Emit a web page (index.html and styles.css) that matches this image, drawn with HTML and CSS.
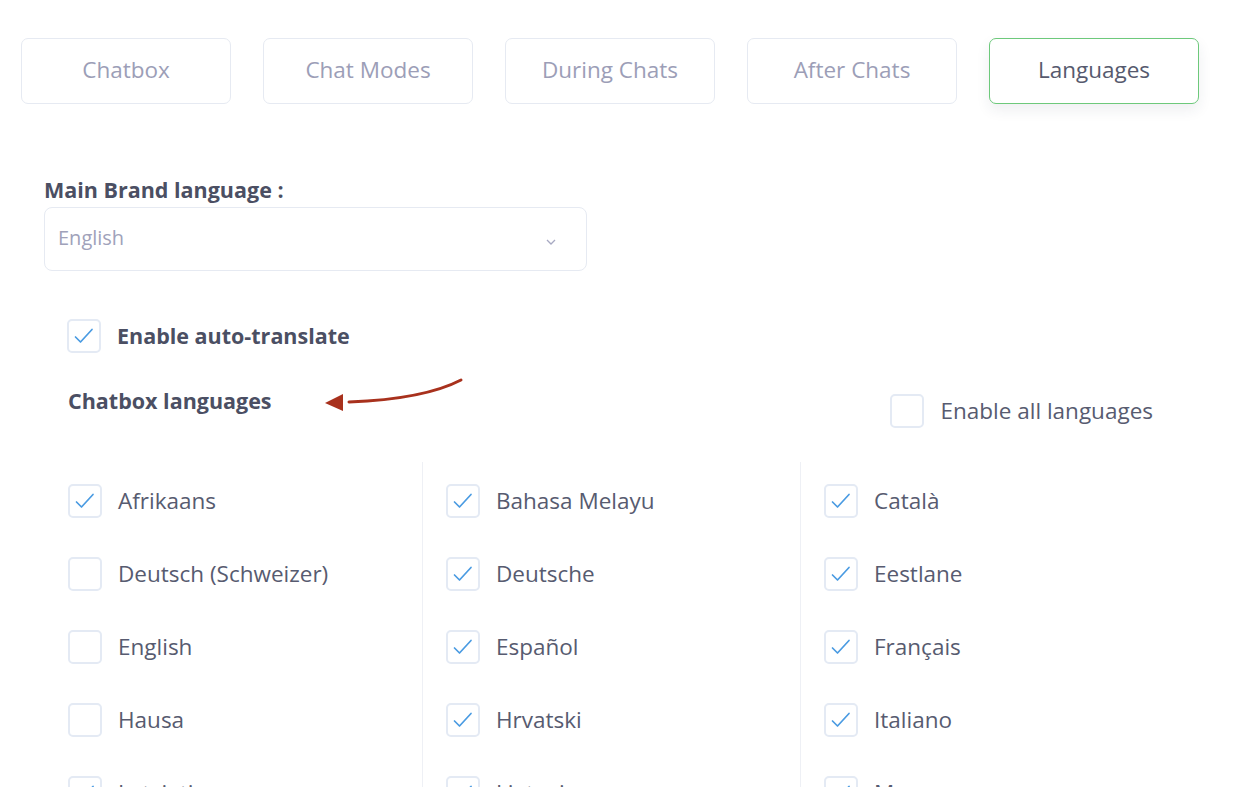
FILE: index.html
```html
<!doctype html>
<html lang="en">
<head>
<meta charset="utf-8">
<meta name="viewport" content="width=device-width, initial-scale=1">
<title>Chatbox settings - Languages</title>
<link rel="stylesheet" href="styles.css">
</head>
<body>

	<div class="page">

		<nav class="tabs">
			<button class="tab">Chatbox</button>
			<button class="tab">Chat Modes</button>
			<button class="tab">During Chats</button>
			<button class="tab">After Chats</button>
			<button class="tab active">Languages</button>
		</nav>

		<section class="content">

			<label class="fieldLabel">Main Brand language :</label>
			<div class="select">
				<span>English</span>
				<svg class="chevron" width="10" height="6" viewBox="0 0 10 6"><polyline points="1,1 5,5 9,1" fill="none" stroke="#a7a9c2" stroke-width="1.3"/></svg>
			</div>

			<div class="check autoTranslate">
				<span class="box on"></span>
				<span class="strong">Enable auto-translate</span>
			</div>

			<div class="langHead">
				<h3>Chatbox languages</h3>
				<svg class="arrow" width="150" height="40" viewBox="0 0 150 40">
					<path d="M140 4 C 115 17, 80 24, 28 26" fill="none" stroke="#a8311d" stroke-width="3" stroke-linecap="round"/>
					<polygon points="4,27 22,18 22,35" fill="#a8311d"/>
				</svg>
				<div class="check enableAll">
					<span class="box"></span>
					<span>Enable all languages</span>
				</div>
			</div>

			<div class="langGrid" id="langGrid"></div>

		</section>

	</div>

<script>

const languages = [
	[ [ 'Afrikaans', true ], [ 'Deutsch (Schweizer)', false ], [ 'English', false ], [ 'Hausa', false ], [ 'Latvietis', true ] ],
	[ [ 'Bahasa Melayu', true ], [ 'Deutsche', true ], [ 'Español', true ], [ 'Hrvatski', true ], [ 'Lietuvių', true ] ],
	[ [ 'Català', true ], [ 'Eestlane', true ], [ 'Français', true ], [ 'Italiano', true ], [ 'Magyar', true ] ]
];

init();

function init() {

	let htm = '';

	for ( let col of languages ) {

		htm += '<div class="langCol">';

		for ( let [ name, on ] of col ) {

			htm += `<div class="check"><span class="box ${ on ? 'on' : '' }"></span><span>${ name }</span></div>`;

		}

		htm += '</div>';

	}

	langGrid.innerHTML = htm;

}

</script>
</body>
</html>
```

FILE: styles.css
```css
body { background: #fff; color: #575b70; font-family: "Open Sans", Lato, sans-serif; margin: 0; }

.page { height: 787px; overflow: hidden; }

.tabs { display: flex; gap: 32px; padding: 38px 0 0 21px; }
.tab { background: #fff; border: 1.5px solid #e6eaf2; border-radius: 7px; color: #9c9eb7; cursor: pointer; font: 22.5px "Open Sans", sans-serif; height: 66px; padding: 0 0 3px; width: 210px; }
.tab.active { border-color: #6dc97b; box-shadow: 0 6px 14px rgba(40, 50, 80, 0.08); color: #565a6e; }

.content { padding: 72px 0 0 44px; position: relative; }

.fieldLabel { color: #4b4f63; display: block; font-size: 21.5px; font-weight: 700; line-height: 28px; }
.select { align-items: center; border: 1.5px solid #e6eaf2; border-radius: 8px; box-sizing: border-box; color: #a0a2ba; display: flex; font-size: 20px; height: 64px; justify-content: space-between; margin-top: 3px; padding: 0 30px 3px 13px; width: 543px; }
.chevron { margin-top: 8px; }

.check { align-items: center; display: flex; font-size: 22.5px; gap: 16px; }
.check span:last-child { margin-top: -2px; }
.box { border: 2px solid #e4eaf4; border-radius: 5px; box-sizing: border-box; display: inline-block; flex: none; height: 34px; width: 34px; }
.box.on { background: url("data:image/svg+xml,%3Csvg xmlns='http://www.w3.org/2000/svg' width='30' height='30' viewBox='0 0 30 30'%3E%3Cpolyline points='6.5,16 11.5,21 23,8.5' fill='none' stroke='%234a9be2' stroke-width='1.7' stroke-linecap='round' stroke-linejoin='round'/%3E%3C/svg%3E") center no-repeat; }

.autoTranslate { margin: 48px 0 0 23px; }
.strong { color: #4b4f63; font-size: 21.5px; font-weight: 700; }

.langHead { align-items: flex-start; display: flex; justify-content: space-between; margin-top: 32px; padding: 0 95px 0 24px; position: relative; }
.langHead h3 { color: #4b4f63; font-size: 21.5px; font-weight: 700; line-height: 28px; margin: 2px 0 0; }
.arrow { left: 277px; position: absolute; top: -9px; }
.enableAll { margin-top: 9px; }

.langGrid { display: grid; grid-template-columns: repeat(3, 378px); margin-top: 34px; }
.langCol { border-left: 1.5px solid #eef0f5; display: flex; flex-direction: column; gap: 39px; padding: 22px 0 0 23px; }
.langCol:first-child { border-left-color: transparent; }
```
